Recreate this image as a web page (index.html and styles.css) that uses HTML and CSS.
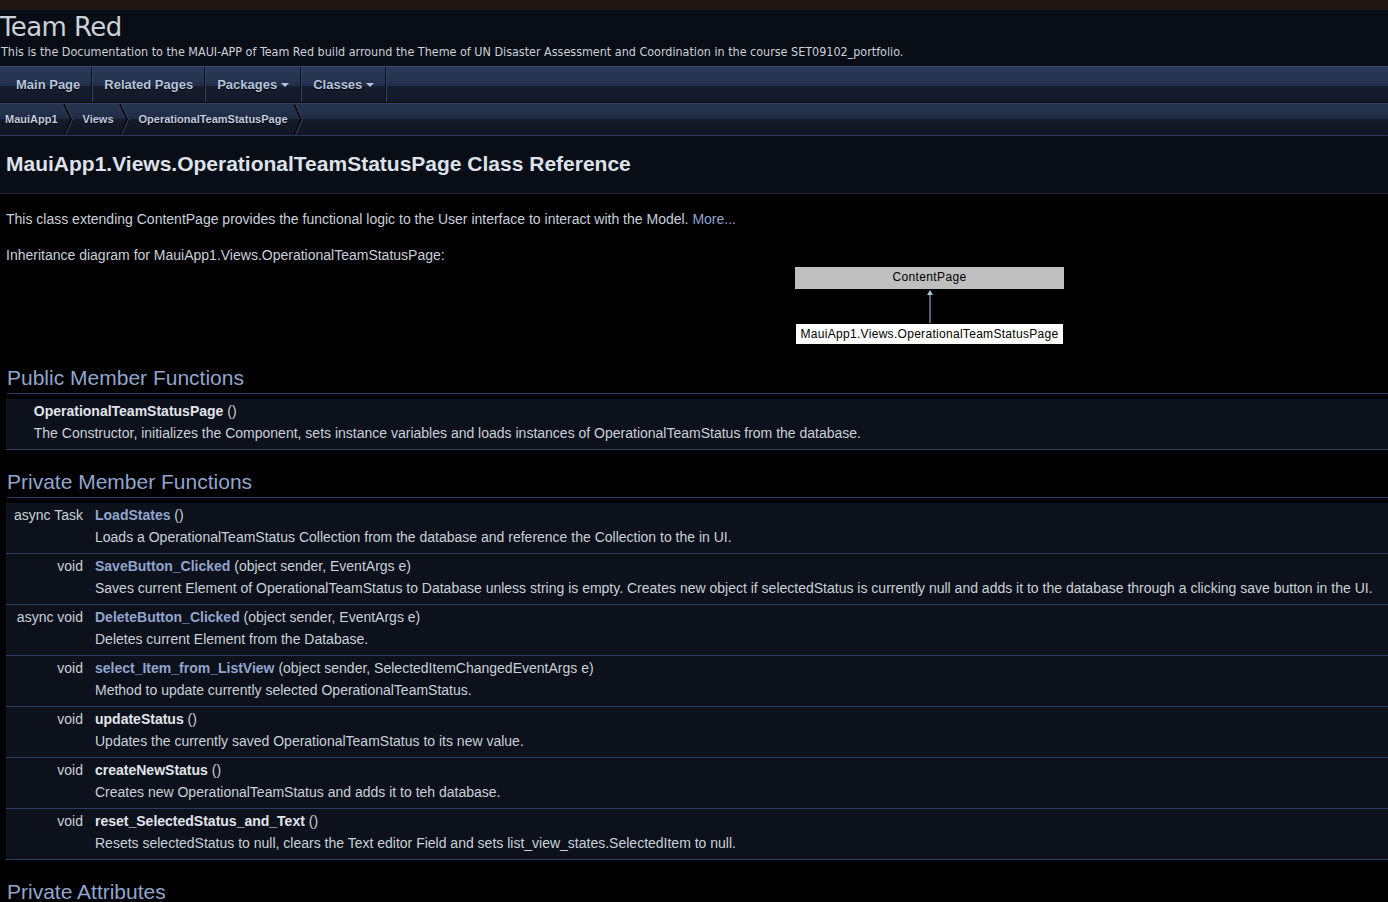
FILE: index.html
```html
<!DOCTYPE html>
<html>
<head>
<meta charset="utf-8">
<title>MauiApp1.Views.OperationalTeamStatusPage Class Reference</title>
<link rel="stylesheet" href="styles.css">
</head>
<body>
<div class="topstrip"></div>
<div class="titlearea">
  <div class="projectname">Team Red</div>
  <div class="projectbrief">This is the Documentation to the MAUI-APP of Team Red build arround the Theme of UN Disaster Assessment and Coordination in the course SET09102_portfolio.</div>
</div>
<nav class="mainmenu">
  <a class="tab">Main Page</a>
  <a class="tab">Related Pages</a>
  <a class="tab has-sub">Packages<span class="caret"></span></a>
  <a class="tab has-sub">Classes<span class="caret"></span></a>
</nav>
<div class="navpath">
  <ul>
    <li><a>MauiApp1</a><svg class="chev" viewBox="0 0 10 31" width="10" height="31"><path d="M1.5 0 L8.5 15.5 L1.5 31" fill="none" stroke="#000" stroke-width="2"/><path d="M2.5 0 L9.5 15.5 L2.5 31" fill="none" stroke="#3c4b6b" stroke-width="1"/></svg></li>
    <li><a>Views</a><svg class="chev" viewBox="0 0 10 31" width="10" height="31"><path d="M1.5 0 L8.5 15.5 L1.5 31" fill="none" stroke="#000" stroke-width="2"/><path d="M2.5 0 L9.5 15.5 L2.5 31" fill="none" stroke="#3c4b6b" stroke-width="1"/></svg></li>
    <li><a>OperationalTeamStatusPage</a><svg class="chev" viewBox="0 0 10 31" width="10" height="31"><path d="M1.5 0 L8.5 15.5 L1.5 31" fill="none" stroke="#000" stroke-width="2"/><path d="M2.5 0 L9.5 15.5 L2.5 31" fill="none" stroke="#3c4b6b" stroke-width="1"/></svg></li>
  </ul>
</div>
<div class="header">
  <div class="title">MauiApp1.Views.OperationalTeamStatusPage Class Reference</div>
</div>
<div class="contents">
  <p>This class extending ContentPage provides the functional logic to the User interface to interact with the Model. <a class="el">More...</a></p>
  <p class="dynheader">Inheritance diagram for MauiApp1.Views.OperationalTeamStatusPage:</p>
  <div class="diagram">
    <div class="dbox base">ContentPage</div>
    <svg class="darrow" width="10" height="34" viewBox="0 0 10 34"><line x1="5" y1="3" x2="5" y2="34" stroke="#a6c8e2" stroke-width="1"/><path d="M2 6 L5 1 L8 6 Z" fill="#a6c8e2"/></svg>
    <div class="dbox derived">MauiApp1.Views.OperationalTeamStatusPage</div>
  </div>

  <h2 class="groupheader">Public Member Functions</h2>
  <table class="memberdecls">
    <tr><td class="left">&nbsp;&nbsp;</td><td class="right"><a class="name">OperationalTeamStatusPage</a> ()</td></tr>
    <tr><td class="dleft"></td><td class="dright">The Constructor, initializes the Component, sets instance variables and loads instances of OperationalTeamStatus from the database.</td></tr>
    <tr class="sep"><td colspan="2"></td></tr>
  </table>

  <h2 class="groupheader">Private Member Functions</h2>
  <table class="memberdecls">
    <tr><td class="left">async Task</td><td class="right"><a class="link">LoadStates</a> ()</td></tr>
    <tr><td class="dleft"></td><td class="dright">Loads a OperationalTeamStatus Collection from the database and reference the Collection to the in UI.</td></tr>
    <tr class="sep"><td colspan="2"></td></tr>
    <tr><td class="left">void</td><td class="right"><a class="link">SaveButton_Clicked</a> (object sender, EventArgs e)</td></tr>
    <tr><td class="dleft"></td><td class="dright">Saves current Element of OperationalTeamStatus to Database unless string is empty. Creates new object if selectedStatus is currently null and adds it to the database through a clicking save button in the UI.</td></tr>
    <tr class="sep"><td colspan="2"></td></tr>
    <tr><td class="left">async void</td><td class="right"><a class="link">DeleteButton_Clicked</a> (object sender, EventArgs e)</td></tr>
    <tr><td class="dleft"></td><td class="dright">Deletes current Element from the Database.</td></tr>
    <tr class="sep"><td colspan="2"></td></tr>
    <tr><td class="left">void</td><td class="right"><a class="link">select_Item_from_ListView</a> (object sender, SelectedItemChangedEventArgs e)</td></tr>
    <tr><td class="dleft"></td><td class="dright">Method to update currently selected OperationalTeamStatus.</td></tr>
    <tr class="sep"><td colspan="2"></td></tr>
    <tr><td class="left">void</td><td class="right"><a class="name">updateStatus</a> ()</td></tr>
    <tr><td class="dleft"></td><td class="dright">Updates the currently saved OperationalTeamStatus to its new value.</td></tr>
    <tr class="sep"><td colspan="2"></td></tr>
    <tr><td class="left">void</td><td class="right"><a class="name">createNewStatus</a> ()</td></tr>
    <tr><td class="dleft"></td><td class="dright">Creates new OperationalTeamStatus and adds it to teh database.</td></tr>
    <tr class="sep"><td colspan="2"></td></tr>
    <tr><td class="left">void</td><td class="right"><a class="name">reset_SelectedStatus_and_Text</a> ()</td></tr>
    <tr><td class="dleft"></td><td class="dright">Resets selectedStatus to null, clears the Text editor Field and sets list_view_states.SelectedItem to null.</td></tr>
    <tr class="sep"><td colspan="2"></td></tr>
  </table>

  <h2 class="groupheader">Private Attributes</h2>
</div>
</body>
</html>
```
FILE: styles.css
```css
html, body {
  margin: 0;
  padding: 0;
  background: #000000;
  color: #c9d1d9;
  font-family: "Liberation Sans", Arial, sans-serif;
  font-size: 14px;
  line-height: 22px;
  overflow: hidden;
}

.topstrip {
  height: 10px;
  background: #1f1611;
}

.titlearea {
  background: #090d16;
  height: 56px;
  padding: 0;
}

.projectname {
  font-family: "DejaVu Sans", Tahoma, sans-serif;
  font-size: 26px;
  line-height: 34px;
  color: #c9d1d9;
  letter-spacing: -0.6px;
  padding-left: 0;
}

.projectbrief {
  font-family: "DejaVu Sans Condensed", "DejaVu Sans", Tahoma, sans-serif;
  font-size: 12.45px;
  line-height: 16px;
  color: #c9d1d9;
  padding-left: 1px;
}

.mainmenu {
  display: flex;
  height: 35px;
  border-top: 1px solid #3a4a6a;
  border-bottom: 1px solid #06080d;
  background: linear-gradient(#2b3a5a 0, #23304c 54%, #171e2e 55%, #121827 100%);
  padding-left: 4px;
}

.tab {
  display: flex;
  align-items: center;
  padding: 0 11px 0 12px;
  font-family: "Liberation Sans", Arial, sans-serif;
  font-weight: bold;
  font-size: 13px;
  color: #b6c4df;
  text-shadow: 0 1px 1px #000;
  border-right: 1px solid #0b0f19;
  box-shadow: 1px 0 0 #34435f;
}

.caret {
  display: inline-block;
  width: 0;
  height: 0;
  margin-left: 4px;
  margin-top: 1px;
  border-left: 4px solid transparent;
  border-right: 4px solid transparent;
  border-top: 4px solid #b6c4df;
}

.navpath {
  height: 31px;
  border-top: 1px solid #33436a;
  border-bottom: 1px solid #2a3856;
  background: linear-gradient(#26344f 0, #202c45 48%, #151b2a 49%, #111624 100%);
}

.navpath ul {
  list-style: none;
  margin: 0;
  padding: 0;
  display: flex;
  height: 31px;
}

.navpath li {
  display: flex;
  align-items: center;
  padding-left: 10px;
  gap: 5px;
}

.navpath li:first-child {
  padding-left: 5px;
}

.navpath li a {
  font-family: "Liberation Sans", Arial, sans-serif;
  font-weight: bold;
  font-size: 11px;
  line-height: 29px;
  color: #c2cbe0;
  text-shadow: 0 1px 1px #000;
}

.chev {
  display: block;
  flex: none;
}

.header {
  background: #090d16;
  border-bottom: 1px solid #1d2435;
}

.title {
  font-family: "Liberation Sans", Arial, sans-serif;
  font-weight: bold;
  font-size: 21px;
  line-height: 28px;
  color: #dde2ea;
  padding: 14px 6px 15px 6px;
}

.contents {
  padding-left: 6px;
}

.contents p {
  margin: 14px 0 14px 0;
}

.contents p.dynheader {
  margin: 14px 0 0 0;
}

a.el {
  color: #90a5ce;
}

.diagram {
  display: flex;
  flex-direction: column;
  align-items: center;
  width: 269px;
  margin-left: 789px;
  margin-top: 1px;
}

.dbox {
  width: 269px;
  height: 22px;
  box-sizing: border-box;
  text-align: center;
  font-family: "Liberation Sans", Arial, sans-serif;
  font-size: 12px;
  letter-spacing: 0.35px;
  line-height: 20px;
  color: #000;
  white-space: nowrap;
}

.dbox.base {
  background: #bfbfbf;
}

.dbox.derived {
  background: #ffffff;
  border: 1px solid #000;
  letter-spacing: 0.3px;
}

.darrow {
  display: block;
}

h2.groupheader {
  font-family: "Liberation Sans", Arial, sans-serif;
  font-weight: normal;
  font-size: 21px;
  line-height: 28px;
  color: #90a5ce;
  margin: 18px 0 5px 1px;
  padding: 0 0 1px 0;
  border-bottom: 1px solid #283a5d;
}

h2.groupheader:first-of-type {
  margin-top: 19px;
}

.memberdecls {
  border-collapse: separate;
  border-spacing: 0;
  width: calc(100% + 6px);
}

.memberdecls td {
  background: #0d111b;
  vertical-align: top;
}

.memberdecls td.left {
  white-space: nowrap;
  text-align: right;
  padding: 1px 4px 0 8px;
}

.memberdecls td.right {
  width: 100%;
  padding: 1px 8px 0 8px;
}

.memberdecls td.dleft {
  padding: 0 4px 5px 8px;
}

.memberdecls td.dright {
  padding: 0 8px 5px 8px;
  white-space: nowrap;
}

.memberdecls tr.sep td {
  height: 1px;
  padding: 0;
  font-size: 0;
  line-height: 1px;
  background: #2c3d5e;
}

a.name {
  font-weight: bold;
  color: #e1e5ec;
}

a.link {
  font-weight: bold;
  color: #90a5ce;
}
```
